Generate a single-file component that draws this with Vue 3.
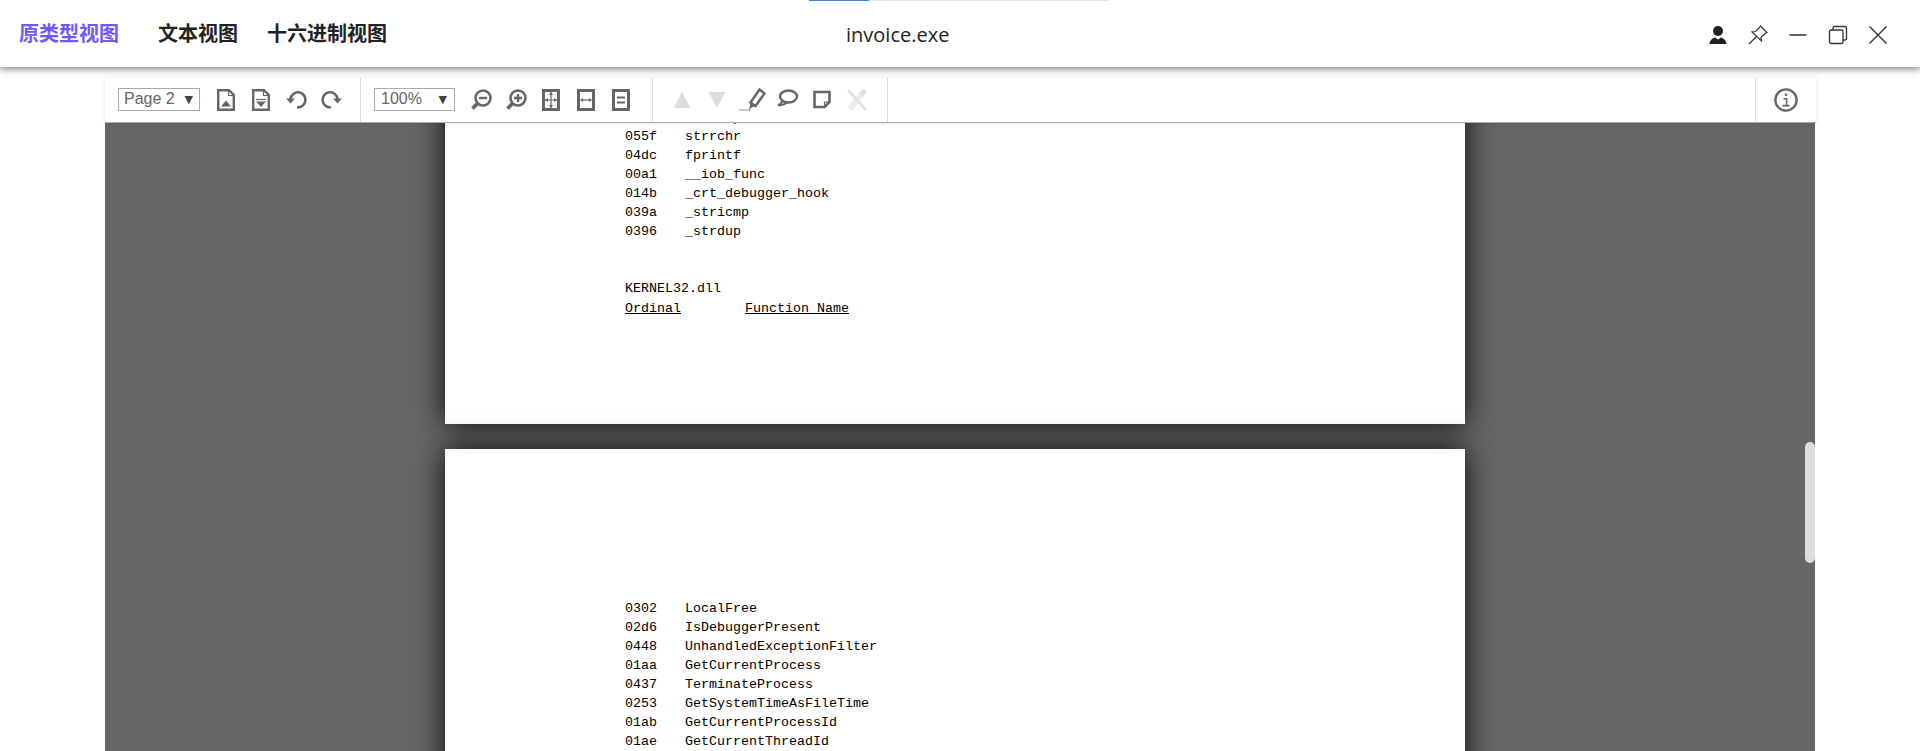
<template>
  <div class="app">
    <header class="topbar">
      <div class="progress"><div class="progress-fill"></div></div>
      <nav class="tabs">
        <span v-for="tab in tabs" :key="tab" class="tab" :class="{ active: tab === activeTab }">{{ tab }}</span>
      </nav>
      <div class="title">invoice.exe</div>
      <div class="win-actions">
        <svg class="win-icon" viewBox="0 0 24 24">
          <circle cx="12" cy="8" r="5" fill="#222" />
          <path d="M3.5 21C4 16.5 7 15.3 9 14.5L12 16.5 15 14.5C17 15.3 20 16.5 20.5 21Z" fill="#222" />
        </svg>
        <svg class="win-icon" viewBox="0 0 24 24" fill="none" stroke="#333" stroke-width="1.2">
          <path d="M14.5 3L21 9.5 19 10.5 15 14.5 15.5 18 6 9 9.5 8.5 13.5 4.5Z" />
          <path d="M10.5 13.5L3 21" />
        </svg>
        <svg class="win-icon" viewBox="0 0 24 24" fill="none" stroke="#333" stroke-width="1.5">
          <path d="M3.5 12H20.5" />
        </svg>
        <svg class="win-icon" viewBox="0 0 24 24" fill="none" stroke="#333" stroke-width="1.3">
          <rect x="3.5" y="7" width="13.5" height="13.5" rx="1.5" />
          <path d="M7 7V5C7 4 7.6 3.5 8.5 3.5H19C20 3.5 20.5 4 20.5 5V15.5C20.5 16.5 20 17 19 17H17" />
        </svg>
        <svg class="win-icon" viewBox="0 0 24 24" fill="none" stroke="#333" stroke-width="1.4">
          <path d="M3.5 3.5L20.5 20.5M20.5 3.5L3.5 20.5" />
        </svg>
      </div>
    </header>

    <main class="workspace">
      <div class="toolbar">
        <div class="group group-page">
          <div class="select select-page"><span>Page 2</span><span class="caret">▼</span></div>
          <svg class="tool first" viewBox="0 0 24 24">
            <path d="M4.2 2.2H15L19.8 7V21.8H4.2Z" fill="none" stroke="#666" stroke-width="2.4" />
            <path d="M14.5 2V7.5H20" fill="none" stroke="#666" stroke-width="1.2" />
            <path d="M7 18.5L12 12.5 17 18.5Z" fill="#666" />
          </svg>
          <svg class="tool" viewBox="0 0 24 24">
            <path d="M4.2 2.2H15L19.8 7V21.8H4.2Z" fill="none" stroke="#666" stroke-width="2.4" />
            <path d="M14.5 2V7.5H20" fill="none" stroke="#666" stroke-width="1.2" />
            <path d="M7 13.5H17L12 19Z" fill="#666" />
            <path d="M7 11.5H17" stroke="#666" stroke-width="1.2" />
          </svg>
          <svg class="tool" viewBox="0 0 24 24">
            <path d="M6.5 11A7.5 7.5 0 1 1 13 19.2" fill="none" stroke="#666" stroke-width="2.6" />
            <path d="M2 10.5H11L6.5 15.5Z" fill="#666" />
          </svg>
          <svg class="tool redo" viewBox="0 0 24 24">
            <path d="M17.5 11A7.5 7.5 0 1 0 11 19.2" fill="none" stroke="#666" stroke-width="2.6" />
            <path d="M13 10.5H22L17.5 15.5Z" fill="#666" />
          </svg>
        </div>

        <div class="group group-zoom">
          <div class="select select-zoom"><span>100%</span><span class="caret">▼</span></div>
          <svg class="tool first" viewBox="0 0 24 24">
            <circle cx="14" cy="10" r="7.5" fill="none" stroke="#666" stroke-width="2.6" />
            <path d="M8.5 15.5L3.5 20.5" stroke="#666" stroke-width="3.8" />
            <path d="M10 10H18" stroke="#666" stroke-width="2.4" />
          </svg>
          <svg class="tool" viewBox="0 0 24 24">
            <circle cx="14" cy="10" r="7.5" fill="none" stroke="#666" stroke-width="2.6" />
            <path d="M8.5 15.5L3.5 20.5" stroke="#666" stroke-width="3.8" />
            <path d="M10 10H18M14 6V14" stroke="#666" stroke-width="2.4" />
          </svg>
          <svg class="tool" viewBox="0 0 24 24" fill="none" stroke="#666">
            <rect x="4.5" y="2.5" width="15" height="19" stroke-width="3" />
            <path d="M12 4V20M5 12H19" stroke-width="1.2" />
            <path d="M12 4L10 7H14ZM12 20L10 17H14ZM6 12L9 10V14ZM18 12L15 10V14Z" fill="#666" stroke="none" />
          </svg>
          <svg class="tool" viewBox="0 0 24 24" fill="none" stroke="#666">
            <rect x="4.5" y="2.5" width="15" height="19" stroke-width="3" />
            <path d="M7 12H17" stroke-width="1.2" />
            <path d="M6 12L9 10V14ZM18 12L15 10V14Z" fill="#666" stroke="none" />
          </svg>
          <svg class="tool" viewBox="0 0 24 24" fill="none" stroke="#666">
            <rect x="4.5" y="2.5" width="15" height="19" stroke-width="3" />
            <path d="M8 9.5H16M8 14.5H16" stroke-width="2" />
          </svg>
        </div>

        <div class="group group-annot">
          <svg class="tool first" viewBox="0 0 24 24">
            <path d="M3.5 20H20.5L12 4Z" fill="#ddd" />
          </svg>
          <svg class="tool" viewBox="0 0 24 24">
            <path d="M3.5 4H20.5L12 20Z" fill="#ddd" />
          </svg>
          <svg class="tool" viewBox="0 0 24 24">
            <path d="M-1 21H10V23H-1Z" fill="#ccc" />
            <path d="M19.5 1.5L24.5 5.5 15.5 18 10.5 14.5Z" fill="none" stroke="#666" stroke-width="2.4" />
            <path d="M10.5 14.5L15.5 18 11.5 19.5 9 23Z" fill="#666" />
          </svg>
          <svg class="tool" viewBox="0 0 24 24" fill="none" stroke="#666" stroke-width="2.4">
            <ellipse cx="13.5" cy="8.5" rx="8.5" ry="6" />
            <path d="M7.5 12.5C7 14.5 5.5 16.5 3 17 6 17.5 10 16.5 12 14.5" stroke-width="2" />
          </svg>
          <svg class="tool" viewBox="0 0 24 24" fill="none" stroke="#666" stroke-width="2.6">
            <path d="M4.5 4H19.5V14L14.5 19H4.5Z" />
            <path d="M14.5 19V14H19.5" stroke-width="1.2" />
          </svg>
          <svg class="tool" viewBox="0 0 24 24" fill="none">
            <path d="M20 2L5 21" stroke="#ececec" stroke-width="6" />
            <path d="M3 2L21 22" stroke="#e2e2e2" stroke-width="3" />
            <path d="M20 2L16 7" stroke="#dcdcdc" stroke-width="3" />
          </svg>
        </div>

        <div class="group-spacer"></div>

        <div class="group-info">
          <svg class="tool info" viewBox="0 0 24 24" fill="none" stroke="#666">
            <circle cx="12" cy="12" r="10.6" stroke-width="2.4" />
            <circle cx="12" cy="6.8" r="1.4" fill="#666" stroke="none" />
            <path d="M9.5 10.8H12.6V17.6M8.5 17.6H15.5" stroke-width="1.6" />
          </svg>
        </div>
      </div>

      <div class="viewer">
        <section class="page page-one">
          <div v-for="row in pageOneRows" :key="row[0]" class="row">
            <span class="ord">{{ row[0] }}</span><span>{{ row[1] }}</span>
          </div>
          <div class="dll">KERNEL32.dll</div>
          <div class="row head">
            <span class="head-ord">Ordinal</span><span class="underline">Function Name</span>
          </div>
        </section>

        <section class="page page-two">
          <div v-for="row in pageTwoRows" :key="row[0]" class="row">
            <span class="ord">{{ row[0] }}</span><span>{{ row[1] }}</span>
          </div>
        </section>

        <div class="scroll-thumb"></div>
      </div>
    </main>
  </div>
</template>

<script setup>
const activeTab = '原类型视图';
const tabs = ['原类型视图', '文本视图', '十六进制视图'];

const pageOneRows = [
  ['0542', 'strncmp'],
  ['055f', 'strrchr'],
  ['04dc', 'fprintf'],
  ['00a1', '__iob_func'],
  ['014b', '_crt_debugger_hook'],
  ['039a', '_stricmp'],
  ['0396', '_strdup']
];

const pageTwoRows = [
  ['0302', 'LocalFree'],
  ['02d6', 'IsDebuggerPresent'],
  ['0448', 'UnhandledExceptionFilter'],
  ['01aa', 'GetCurrentProcess'],
  ['0437', 'TerminateProcess'],
  ['0253', 'GetSystemTimeAsFileTime'],
  ['01ab', 'GetCurrentProcessId'],
  ['01ae', 'GetCurrentThreadId']
];
</script>

<style scoped>
.app {
  width: 1920px;
  height: 751px;
  overflow: hidden;
  display: flex;
  flex-direction: column;
  background: white;
}

.topbar {
  position: relative;
  flex: 0 0 67px;
  display: flex;
  align-items: center;
  background: white;
  box-shadow: 0 2px 7px rgba(0, 0, 0, 0.5);
}

.progress {
  position: absolute;
  top: 0;
  left: 809px;
  width: 300px;
  height: 1px;
  background: #e5e5e5;
}

.progress-fill {
  width: 60px;
  height: 100%;
  background: #4a7fd0;
}

.tabs {
  flex: 0 0 846px;
  display: flex;
  gap: 29px;
  padding-left: 19px;
  padding-bottom: 2px;
  box-sizing: border-box;
}

.tab {
  font-family: "Noto Sans CJK SC", sans-serif;
  font-size: 20px;
  line-height: 28px;
  font-weight: 700;
  color: #222;
}

.tab.active {
  margin-right: 10px;
  color: #7158ff;
}

.title {
  font-family: "Open Sans", sans-serif;
  font-size: 20px;
  color: #222;
  padding-top: 1px;
}

.win-actions {
  margin-left: auto;
  display: flex;
  gap: 16px;
  padding-right: 30px;
  padding-top: 3px;
}

.win-icon {
  width: 24px;
  height: 24px;
}

.workspace {
  flex: 1;
  min-height: 0;
  display: flex;
  flex-direction: column;
  padding: 11px 104px 0 105px;
}

.toolbar {
  position: relative;
  z-index: 1;
  flex: 0 0 44px;
  display: flex;
  align-items: center;
  background: white;
  border-bottom: 1px solid #aaa;
  box-shadow: 0 0 5px rgba(0, 0, 0, 0.1);
}

.group {
  height: 100%;
  box-sizing: border-box;
  display: flex;
  align-items: center;
  gap: 11px;
  border-right: 1px solid #ddd;
}

.group-page {
  flex: 0 0 256px;
  padding-left: 13px;
}

.group-zoom {
  flex: 0 0 292px;
  padding-left: 13px;
}

.group-annot {
  flex: 0 0 235px;
}

.group-spacer {
  flex: 1;
}

.group-info {
  flex: 0 0 61px;
  height: 100%;
  box-sizing: border-box;
  display: flex;
  align-items: center;
  justify-content: center;
  border-left: 1px solid #ddd;
}

.select {
  box-sizing: border-box;
  height: 23px;
  margin-bottom: 2px;
  display: flex;
  align-items: center;
  justify-content: space-between;
  border: 1px solid #aaa;
  font-family: "Liberation Sans", Arial, sans-serif;
  font-size: 16px;
  color: #666;
}

.select-page {
  width: 82px;
  padding: 0 6px 0 5px;
}

.select-zoom {
  width: 81px;
  padding: 0 7px 0 6px;
}

.caret {
  font-family: "DejaVu Sans", sans-serif;
  font-size: 11px;
  color: #444;
}

.tool {
  flex: none;
  width: 24px;
  height: 24px;
  overflow: visible;
}

.group-page .first,
.group-zoom .first {
  margin-left: 2.5px;
}

.group-annot .first {
  margin-left: 16.5px;
}

.redo {
  margin-left: 1px;
}

.viewer {
  position: relative;
  flex: 1;
  min-height: 0;
  overflow: hidden;
  background: #666;
  border-right: 1px solid white;
}

.page {
  width: 1020px;
  margin-left: 340px;
  box-sizing: border-box;
  padding-left: 180px;
  background: white;
  box-shadow: 0 0 28px rgba(0, 0, 0, 0.9);
  font-family: "Liberation Mono", monospace;
  font-size: 13.33px;
  line-height: 19.1px;
  color: #000;
}

.page-one {
  height: 401px;
  margin-top: -100px;
  padding-top: 84.5px;
}

.page-two {
  height: 500px;
  margin-top: 25px;
  padding-top: 149.5px;
  line-height: 19px;
}

.row {
  display: flex;
}

.ord {
  width: 60px;
}

.dll {
  margin-top: 38px;
}

.head {
  margin-top: 1px;
}

.head-ord {
  width: 120px;
  text-decoration: underline;
}

.underline {
  text-decoration: underline;
}

.scroll-thumb {
  position: absolute;
  top: 319px;
  right: 0;
  width: 10px;
  height: 121px;
  border-radius: 5px;
  background: #ddd;
}
</style>
